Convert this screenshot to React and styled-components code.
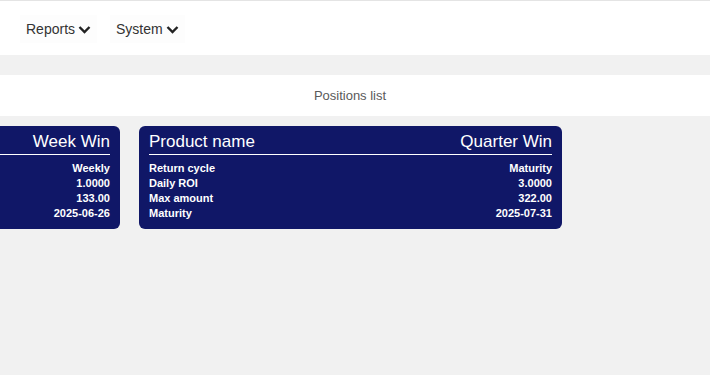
import React from "react";
import styled, { createGlobalStyle } from "styled-components";

const GlobalStyle = createGlobalStyle`
  html, body {
    margin: 0;
    padding: 0;
    background: #f1f1f1;
    font-family: "Liberation Sans", Arial, sans-serif;
    overflow: hidden;
  }
`;

const Page = styled.div`
  width: 710px;
  height: 375px;
  overflow: hidden;
  background: #f1f1f1;
`;

const TopBar = styled.header`
  background: #fff;
  border-top: 1px solid #e4e4e4;
  display: flex;
  align-items: center;
  padding: 2px 0 0 20px;
  box-sizing: border-box;
  height: 55px;
  gap: 13px;
`;

const NavItem = styled.div`
  display: flex;
  align-items: center;
  gap: 3px;
  padding: 6px;
  font-size: 14px;
  color: #333;
  background: #fdfdfd;
`;

const Chevron = () => (
  <svg width="13" height="9" viewBox="0 0 13 9">
    <path d="M1.5 2 L6.5 7 L11.5 2" fill="none" stroke="#222" strokeWidth="2.4" />
  </svg>
);

const TitleBar = styled.div`
  margin-top: 20px;
  height: 41px;
  background: #fff;
  display: flex;
  align-items: center;
  justify-content: center;
  padding-right: 10px;
  font-size: 13px;
  color: #5a5a5a;
`;

const CardRow = styled.div`
  display: flex;
  gap: 19px;
  padding-top: 10px;
  margin-left: ${p => p.offset}px;
`;

const Card = styled.div`
  flex: 0 0 423px;
  box-sizing: border-box;
  background: #101767;
  border-radius: 6px;
  padding: 4px 10px 8px;
  color: #fff;
`;

const CardHead = styled.div`
  display: flex;
  justify-content: space-between;
  align-items: center;
  height: 24px;
  border-bottom: 1px solid #fff;
  font-size: 17px;
  margin-bottom: 6px;
`;

const Row = styled.div`
  display: flex;
  justify-content: space-between;
  font-size: 11px;
  font-weight: bold;
  line-height: 15px;
`;

const products = [
  {
    title: "Week Win",
    cycle: "Weekly",
    roi: "1.0000",
    max: "133.00",
    maturity: "2025-06-26",
  },
  {
    title: "Quarter Win",
    cycle: "Maturity",
    roi: "3.0000",
    max: "322.00",
    maturity: "2025-07-31",
  },
];

const App = () => {
  return (
    <Page>
      <GlobalStyle />
      <TopBar>
        <NavItem>
          Reports <Chevron />
        </NavItem>
        <NavItem>
          System <Chevron />
        </NavItem>
      </TopBar>
      <TitleBar>Positions list</TitleBar>
      {/* row is scrolled left in the shot, first card partly hidden */}
      <CardRow offset={-303}>
        {products.map(p => (
          <Card key={p.title}>
            <CardHead>
              <span>Product name</span>
              <span>{p.title}</span>
            </CardHead>
            <Row>
              <span>Return cycle</span>
              <span>{p.cycle}</span>
            </Row>
            <Row>
              <span>Daily ROI</span>
              <span>{p.roi}</span>
            </Row>
            <Row>
              <span>Max amount</span>
              <span>{p.max}</span>
            </Row>
            <Row>
              <span>Maturity</span>
              <span>{p.maturity}</span>
            </Row>
          </Card>
        ))}
      </CardRow>
    </Page>
  );
};

export default App;
